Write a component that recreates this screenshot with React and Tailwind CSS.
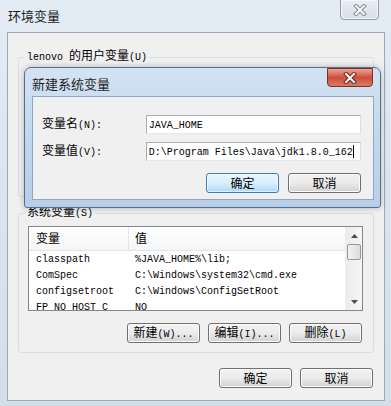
import React from "react";

// splits text into latin runs (mono, 10px) and CJK runs (12px) like SimSun
function T({ s, className = "" }) {
    const parts = s.match(/[\x00-\x7f]+|[^\x00-\x7f]+/g) || [];
    return (
        <span className={"whitespace-pre leading-[14px] " + className}>
            {parts.map((p, i) =>
                /^[\x00-\x7f]/.test(p) ? (
                    <span key={i} className="font-['Liberation_Mono',monospace] text-[10px]">
                        {p}
                    </span>
                ) : (
                    <span key={i} className="font-['Noto_Sans_CJK_SC',sans-serif] text-[12px]">
                        {p}
                    </span>
                )
            )}
        </span>
    );
}

function Btn({ label, primary }) {
    return (
        <button
            className={
                primary
                    ? "w-[73px] h-[20px] rounded-[3px] border border-[#3c7fb1] bg-gradient-to-b from-[#eaf6fd] via-[#d9f0fc] to-[#a9daf5] flex items-center justify-center text-black shadow-[inset_0_0_0_1px_#ffffff99]"
                    : "w-[73px] h-[20px] rounded-[3px] border border-[#707070] bg-gradient-to-b from-[#f2f2f2] via-[#ebebeb] to-[#d2d2d2] flex items-center justify-center text-black shadow-[inset_0_0_0_1px_#fcfcfc]"
            }
        >
            <T s={label} />
        </button>
    );
}

function XIcon({ stroke = "#6b7a8c" }) {
    return (
        <svg width="14" height="12" viewBox="0 0 14 12">
            <path d="M3 2 L11 10 M11 2 L3 10" stroke={stroke} strokeWidth="4" strokeLinecap="square" />
            <path d="M3 2 L11 10 M11 2 L3 10" stroke="#ffffff" strokeWidth="2" strokeLinecap="square" />
        </svg>
    );
}

const rows = [
    ["classpath", "%JAVA_HOME%\\lib;"],
    ["ComSpec", "C:\\Windows\\system32\\cmd.exe"],
    ["configsetroot", "C:\\Windows\\ConfigSetRoot"],
    ["FP_NO_HOST_C", "NO"],
];

export default function App() {
    return (
        <div className="w-[391px] h-[406px] relative overflow-hidden bg-gradient-to-b from-[#e3ebf4] to-[#d3dee9] flex flex-col text-black text-[12px] leading-[14px]">
            {/* title bar */}
            <div className="h-[32px] flex items-start justify-between pl-[8px] pr-[12px] shrink-0">
                <div className="pt-[7px] font-['Noto_Sans_CJK_SC',sans-serif] text-[13px] leading-[18px] text-[#1e1e1e]">
                    环境变量
                </div>
                <div className="w-[39px] h-[21px] -mt-[1px] rounded-b-[4px] border border-[#8d9bab] bg-gradient-to-b from-[#e9eef4] to-[#d6dfe9] flex items-center justify-center shadow-[inset_0_0_0_1px_#f4f7fa]">
                    <XIcon stroke="#7d8a99" />
                </div>
            </div>

            {/* client area */}
            <div className="ml-[7px] mr-[6px] mb-[5px] flex-1 border border-[#98a9bb] bg-[#f0f0f0] flex flex-col">
                {/* user variables group (mostly covered) */}
                <div className="relative mt-[24px] mx-[10px] h-[140px] border border-[#d5dfe5] rounded-[3px]">
                    <div className="absolute -top-[9px] left-[6px] px-[2px] bg-[#f0f0f0] flex items-center h-[14px]">
                        <T s="lenovo 的用户变量(U)" />
                    </div>
                </div>

                {/* system variables group */}
                <div className="relative mt-[16px] mx-[10px] h-[140px] border border-[#d5dfe5] rounded-[3px] flex flex-col">
                    <div className="absolute -top-[9px] left-[6px] px-[2px] bg-[#f0f0f0] flex items-center h-[14px]">
                        <T s="系统变量(S)" />
                    </div>
                    <div className="mt-[12px] ml-[9px] w-[335px] h-[85px] border border-[#828790] bg-white flex">
                        <div className="flex-1 flex flex-col overflow-hidden">
                            <div className="h-[24px] flex shrink-0 bg-gradient-to-b from-white to-[#f4f5f7] border-b border-[#e5e5e5]">
                                <div className="w-[100px] pl-[7px] flex items-center border-r border-[#e5e5e5]">
                                    <T s="变量" />
                                </div>
                                <div className="pl-[6px] flex items-center">
                                    <T s="值" />
                                </div>
                            </div>
                            {rows.map(([k, v]) => (
                                <div key={k} className="h-[16px] flex items-center shrink-0">
                                    <div className="w-[100px] pl-[7px] flex items-center">
                                        <T s={k} />
                                    </div>
                                    <div className="pl-[6px] flex items-center">
                                        <T s={v} />
                                    </div>
                                </div>
                            ))}
                        </div>
                        <div className="w-[17px] bg-gradient-to-r from-[#ebebeb] to-[#f6f6f6] flex flex-col border-l border-[#eeeeee]">
                            <div className="h-[17px] flex items-center justify-center">
                                <svg width="7" height="4" viewBox="0 0 7 4">
                                    <path d="M0 4 L3.5 0 L7 4 Z" fill="#4d4d4d" />
                                </svg>
                            </div>
                            <div className="h-[16px] mx-[1px] rounded-[2px] border border-[#979797] bg-gradient-to-r from-[#f3f3f3] to-[#dcdcdc]" />
                            <div className="flex-1" />
                            <div className="h-[17px] flex items-center justify-center">
                                <svg width="7" height="4" viewBox="0 0 7 4">
                                    <path d="M0 0 L7 0 L3.5 4 Z" fill="#4d4d4d" />
                                </svg>
                            </div>
                        </div>
                    </div>
                    <div className="mt-[12px] pr-[11px] flex justify-end gap-[8px]">
                        <Btn label="新建(W)..." />
                        <Btn label="编辑(I)..." />
                        <Btn label="删除(L)" />
                    </div>
                </div>

                <div className="mt-[15px] pr-[11px] flex justify-end gap-[8px]">
                    <Btn label="确定" />
                    <Btn label="取消" />
                </div>
            </div>

            {/* nested dialog window */}
            <div className="absolute left-[24px] top-[67px] w-[357px] h-[141px] rounded-t-[7px] rounded-b-[3px] border border-[#4f6f95] bg-gradient-to-b from-[#d3e3f3] via-[#c2d7ec] to-[#b8cfe7] flex flex-col shadow-[0_0_6px_#00000040]">
                <div className="h-[28px] flex items-start justify-between pl-[7px] pr-[7px] shrink-0">
                    <div className="pt-[7px] font-['Noto_Sans_CJK_SC',sans-serif] text-[13px] leading-[18px] text-[#1e1e1e]">
                        新建系统变量
                    </div>
                    <div className="w-[46px] h-[19px] rounded-b-[4px] border border-[#7a3129] bg-gradient-to-b from-[#e8a395] via-[#cc4d3a] to-[#d97a68] flex items-center justify-center">
                        <XIcon stroke="#5e2a22" />
                    </div>
                </div>
                <div className="ml-[7px] mr-[6px] mb-[7px] flex-1 border border-[#8fa6c1] bg-[#f0f0f0] flex flex-col pl-[9px] pr-[12px]">
                    <div className="mt-[18px] flex items-center">
                        <div className="w-[104px] flex items-center">
                            <T s="变量名(N):" />
                        </div>
                        <div className="w-[216px] h-[19px] border border-[#abadb3] border-b-[#e3e9ef] border-r-[#dbdfe6] bg-white flex items-center pl-[2px]">
                            <T s="JAVA_HOME" />
                        </div>
                    </div>
                    <div className="mt-[8px] flex items-center">
                        <div className="w-[104px] flex items-center">
                            <T s="变量值(V):" />
                        </div>
                        <div className="w-[216px] h-[19px] border border-[#abadb3] border-b-[#e3e9ef] border-r-[#dbdfe6] bg-white flex items-center pl-[2px]">
                            <T s="D:\Program Files\Java\jdk1.8.0_162" />
                            <div className="w-[1px] h-[13px] bg-black" />
                        </div>
                    </div>
                    <div className="mt-[12px] flex justify-end gap-[9px]">
                        <Btn label="确定" primary />
                        <Btn label="取消" />
                    </div>
                </div>
            </div>
        </div>
    );
}
